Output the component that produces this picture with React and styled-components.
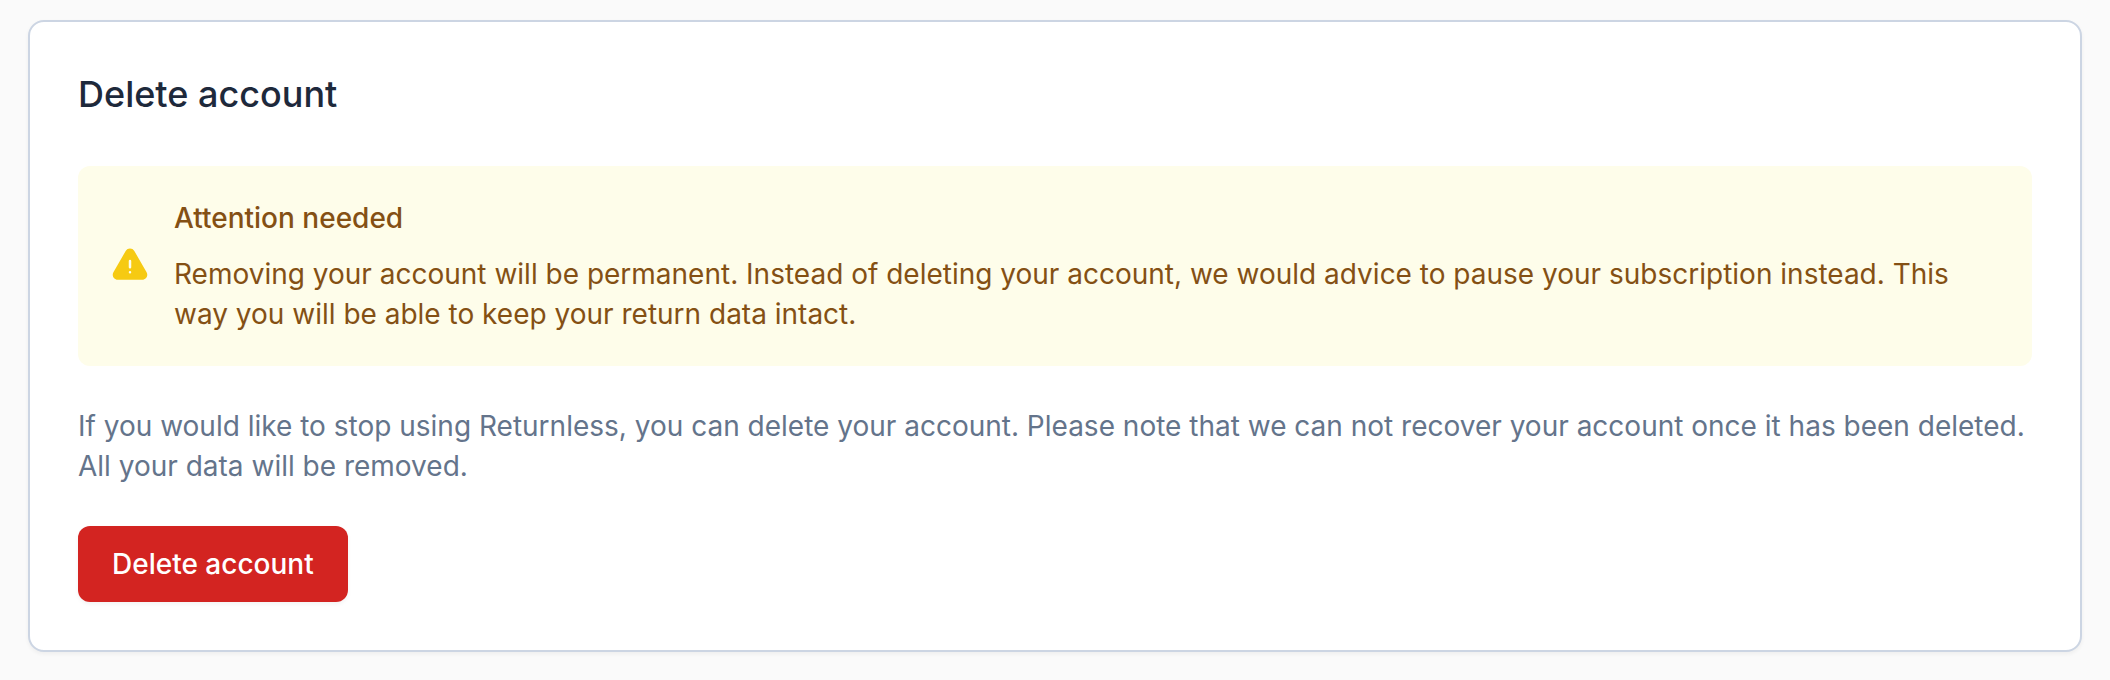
import styled, { createGlobalStyle } from "styled-components";

const GlobalStyle = createGlobalStyle`
  * {
    box-sizing: border-box;
  }
  body {
    margin: 0;
    min-height: 100vh;
    background: #fafafa;
    font-family: Inter, sans-serif;
    font-size: 28px;
    line-height: 40px;
  }
`;
const Page = styled.main`
  padding: 20px 28px 28px;
`;
const Card = styled.section`
  padding: 44px 48px 48px;
  background: #fff;
  border: 2px solid #ccd5e3;
  border-radius: 16px;
  box-shadow: 0 2px 4px rgba(0, 0, 0, 0.05);
`;
const Title = styled.h1`
  margin: 0 0 44px;
  font-size: 36px;
  font-weight: 500;
  line-height: 56px;
  color: #1e293b;
`;
const Alert = styled.div`
  display: flex;
  align-items: center;
  gap: 24px;
  padding: 32px;
  background: #fefdea;
  border-radius: 12px;
  color: #845014;
`;
const AlertIcon = styled.svg`
  flex: none;
  width: 40px;
  height: 40px;
`;
const AlertTitle = styled.h2`
  margin: 0 0 16px;
  font-size: 28px;
  font-weight: 500;
  line-height: 40px;
`;
const AlertText = styled.p`
  margin: 0;
`;
const Desc = styled.p`
  margin: 40px 0;
  color: #64748b;
`;
const Button = styled.button`
  padding: 18px 34px;
  background: #d32421;
  border: none;
  border-radius: 12px;
  box-shadow: 0 2px 4px rgba(0, 0, 0, 0.05);
  color: #fff;
  font: inherit;
  font-weight: 500;
  cursor: pointer;
`;

const App = () => {
  return (
    <Page>
      <GlobalStyle />
      <Card>
        <Title>Delete account</Title>
        <Alert role="alert">
          <AlertIcon viewBox="0 0 24 24" fill="#f6ca12" aria-hidden="true">
            <path
              fillRule="evenodd"
              clipRule="evenodd"
              d="M9.401 3.003c1.155-2 4.043-2 5.197 0l7.355 12.748c1.154 2-.29 4.5-2.599 4.5H4.645c-2.309 0-3.752-2.5-2.598-4.5L9.4 3.003zM12 8.25a.75.75 0 01.75.75v3.75a.75.75 0 01-1.5 0V9a.75.75 0 01.75-.75zm0 8.25a.75.75 0 100-1.5.75.75 0 000 1.5z"
            />
          </AlertIcon>
          <div>
            <AlertTitle>Attention needed</AlertTitle>
            <AlertText>
              Removing your account will be permanent. Instead of deleting your
              account, we would advice to pause your subscription instead. This
              way you will be able to keep your return data intact.
            </AlertText>
          </div>
        </Alert>
        <Desc>
          If you would like to stop using Returnless, you can delete your
          account. Please note that we can not recover your account once it has
          been deleted. All your data will be removed.
        </Desc>
        <Button type="button">Delete account</Button>
      </Card>
    </Page>
  );
};

export default App;
